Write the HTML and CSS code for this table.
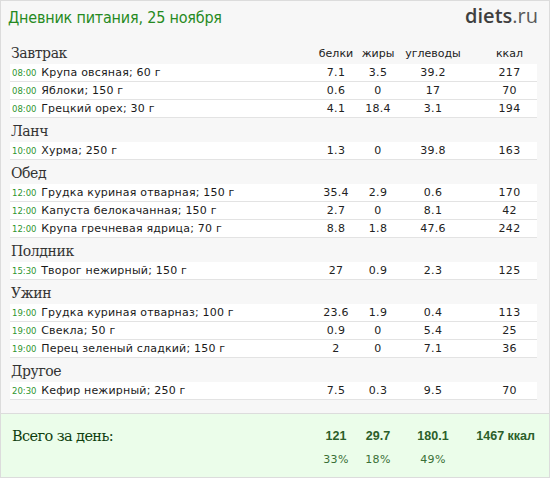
FILE: index.html
```html
<!DOCTYPE html>
<html lang="ru">
<head>
    <meta charset="UTF-8">
    <title>Дневник питания, 25 ноября - diets.ru</title>
    <link rel="stylesheet" href="styles.css">
</head>
<body>
    <div class="diary">
        <div class="diary-header">
            <h1>Дневник питания, 25 ноября</h1>
            <div class="logo">diets<span>.ru</span></div>
        </div>

        <div class="meal">
            <div class="meal-head">
                <h2>Завтрак</h2>
                <span>белки</span>
                <span>жиры</span>
                <span>углеводы</span>
                <span>ккал</span>
            </div>
            <div class="row">
                <div class="name"><i class="time">08:00</i> Крупа овсяная; 60 г</div>
                <span>7.1</span><span>3.5</span><span>39.2</span><span>217</span>
            </div>
            <div class="row">
                <div class="name"><i class="time">08:00</i> Яблоки; 150 г</div>
                <span>0.6</span><span>0</span><span>17</span><span>70</span>
            </div>
            <div class="row">
                <div class="name"><i class="time">08:00</i> Грецкий орех; 30 г</div>
                <span>4.1</span><span>18.4</span><span>3.1</span><span>194</span>
            </div>
        </div>

        <div class="meal">
            <div class="meal-head"><h2>Ланч</h2></div>
            <div class="row">
                <div class="name"><i class="time">10:00</i> Хурма; 250 г</div>
                <span>1.3</span><span>0</span><span>39.8</span><span>163</span>
            </div>
        </div>

        <div class="meal">
            <div class="meal-head"><h2>Обед</h2></div>
            <div class="row">
                <div class="name"><i class="time">12:00</i> Грудка куриная отварная; 150 г</div>
                <span>35.4</span><span>2.9</span><span>0.6</span><span>170</span>
            </div>
            <div class="row">
                <div class="name"><i class="time">12:00</i> Капуста белокачанная; 150 г</div>
                <span>2.7</span><span>0</span><span>8.1</span><span>42</span>
            </div>
            <div class="row">
                <div class="name"><i class="time">12:00</i> Крупа гречневая ядрица; 70 г</div>
                <span>8.8</span><span>1.8</span><span>47.6</span><span>242</span>
            </div>
        </div>

        <div class="meal">
            <div class="meal-head"><h2>Полдник</h2></div>
            <div class="row">
                <div class="name"><i class="time">15:30</i> Творог нежирный; 150 г</div>
                <span>27</span><span>0.9</span><span>2.3</span><span>125</span>
            </div>
        </div>

        <div class="meal">
            <div class="meal-head"><h2>Ужин</h2></div>
            <div class="row">
                <div class="name"><i class="time">19:00</i> Грудка куриная отварназ; 100 г</div>
                <span>23.6</span><span>1.9</span><span>0.4</span><span>113</span>
            </div>
            <div class="row">
                <div class="name"><i class="time">19:00</i> Свекла; 50 г</div>
                <span>0.9</span><span>0</span><span>5.4</span><span>25</span>
            </div>
            <div class="row">
                <div class="name"><i class="time">19:00</i> Перец зеленый сладкий; 150 г</div>
                <span>2</span><span>0</span><span>7.1</span><span>36</span>
            </div>
        </div>

        <div class="meal">
            <div class="meal-head"><h2>Другое</h2></div>
            <div class="row">
                <div class="name"><i class="time">20:30</i> Кефир нежирный; 250 г</div>
                <span>7.5</span><span>0.3</span><span>9.5</span><span>70</span>
            </div>
        </div>

        <div class="total">
            <div class="total-grid">
                <h3>Всего за день:</h3>
                <b>121</b><b>29.7</b><b>180.1</b><b class="kcal">1467 ккал</b>
                <span></span>
                <span class="pct">33%</span><span class="pct">18%</span><span class="pct">49%</span>
                <span></span>
            </div>
        </div>
    </div>
</body>
</html>
```

FILE: styles.css
```css
* {
    margin: 0;
    padding: 0;
    box-sizing: border-box;
}

body {
    font-family: 'DejaVu Sans', Verdana, sans-serif;
    background-color: #ffffff;
}

.diary {
    width: 550px;
    height: 478px;
    border: 1px solid #dcdcdc;
    background-color: #f7f7f7;
    overflow: hidden;
}

.diary-header {
    height: 39px;
    display: flex;
    justify-content: space-between;
    align-items: flex-start;
    padding: 0 11px 0 7px;
}

.diary-header h1 {
    font-family: 'DejaVu Sans', Tahoma, sans-serif;
    font-stretch: condensed;
    font-weight: normal;
    font-size: 16px;
    letter-spacing: -0.2px;
    color: #268a22;
    margin-top: 7px;
}

.logo {
    font-family: 'Open Sans', sans-serif;
    font-weight: 600;
    font-size: 20px;
    color: #3f3f3f;
    margin-top: 1px;
}

.logo span {
    font-weight: normal;
    color: #5a5a5a;
}

.meal {
    padding: 0 12px 0 9px;
}

.meal-head,
.row,
.total-grid {
    display: grid;
    grid-template-columns: 1fr 40px 44px 66px 71px;
    align-items: center;
}

.meal-head {
    height: 24px;
    padding-top: 2px;
}

.meal-head h2 {
    font-family: 'DejaVu Serif', Georgia, serif;
    font-weight: normal;
    font-size: 14px;
    letter-spacing: -0.4px;
    color: #333;
    padding-left: 1px;
}

.meal-head span,
.row span {
    text-align: center;
    font-size: 11px;
    color: #222;
}

.row span {
    letter-spacing: 0.3px;
}

.meal-head span:last-child,
.row span:last-child {
    padding-left: 16px;
}

.row {
    height: 18px;
    background: white;
    border-bottom: 1px solid #e3e3e3;
}

.row .name {
    font-size: 11px;
    letter-spacing: 0.2px;
    color: #1a1a1a;
    padding-left: 2px;
    white-space: nowrap;
}

.row .time {
    font-style: normal;
    font-size: 8.5px;
    letter-spacing: 0;
    color: #2f962f;
    margin-right: 1px;
}

.total {
    margin-top: 13px;
    border-top: 1px solid #dcdcdc;
    background-color: #ebfdea;
    height: 64px;
    padding: 14px 12px 0 9px;
}

.total-grid {
    row-gap: 9px;
}

.total-grid h3 {
    font-family: 'DejaVu Serif', Georgia, serif;
    font-weight: normal;
    font-size: 14.5px;
    letter-spacing: -0.6px;
    color: #0f3f0f;
    padding-left: 2px;
}

.total-grid b {
    font-family: 'Liberation Sans', Arial, sans-serif;
    font-size: 12.5px;
    color: #2c5f2a;
    text-align: center;
}

.total-grid .kcal {
    text-align: right;
    padding-right: 2px;
}

.pct {
    font-size: 11px;
    letter-spacing: 0.4px;
    color: #3a7036;
    text-align: center;
}
```
